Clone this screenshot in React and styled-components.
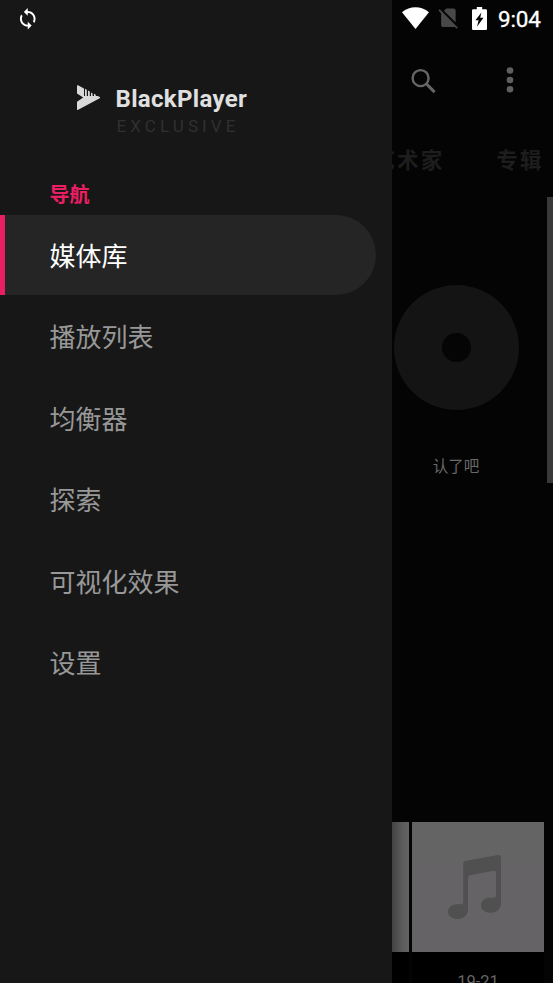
import React from "react";
import styled, { createGlobalStyle } from "styled-components";

const GlobalStyle = createGlobalStyle`
  * { box-sizing: border-box; }
  body { margin: 0; background: #040404; overflow: hidden; }
`;

const Screen = styled.div`
  display: grid;
  grid-template-columns: 392px 161px;
  width: 553px;
  height: 983px;
  overflow: hidden;
  background: #040404;
  font-family: Roboto, "Noto Sans CJK SC", sans-serif;
`;

const Drawer = styled.aside`
  display: flex;
  flex-direction: column;
  background: #171717;
`;

const DrawerStatus = styled.div`
  height: 38px;
  padding: 6.5px 0 0 15.7px;
  svg { display: block; }
`;

const Brand = styled.header`
  display: flex;
  height: 143px;
  padding: 47px 0 0 77px;
  gap: 14.5px;
  svg { flex: none; }
`;

const BrandText = styled.div`
  display: flex;
  flex-direction: column;
`;

const BrandName = styled.div`
  height: 29px;
  line-height: 28px;
  font-size: 24px;
  font-weight: 700;
  color: #e0e0e0;
  letter-spacing: 0.32px;
`;

const Edition = styled.div`
  padding-left: 1px;
  line-height: 24px;
  font-size: 17px;
  letter-spacing: 4.1px;
  color: #303030;
`;

const SectionTitle = styled.h2`
  margin: 0;
  height: 34px;
  padding-left: 49.5px;
  font-size: 20px;
  line-height: 29px;
  font-weight: 700;
  color: #e91e63;
`;

const Menu = styled.nav`
  display: flex;
  flex-direction: column;
  gap: 1.5px;
`;

const MenuItem = styled.a`
  display: flex;
  align-items: center;
  width: 376px;
  height: 80px;
  padding: 3px 0 0 ${(p) => (p.$active ? 44.4 : 49.4)}px;
  border-left: ${(p) => (p.$active ? "5px solid #e91e63" : "none")};
  border-radius: 0 40px 40px 0;
  background: ${(p) => (p.$active ? "#252525" : "transparent")};
  color: ${(p) => (p.$active ? "#fff" : "#989898")};
  font-size: 26px;
  line-height: 38px;
`;

const Library = styled.main`
  display: flex;
  flex-direction: column;
  min-width: 0;
  height: 983px;
  overflow: hidden;
`;

const StatusBar = styled.div`
  display: flex;
  flex: none;
  height: 38px;
  padding: 7px 0 0 10px;
  svg { flex: none; }
`;

const Clock = styled.span`
  margin-left: 11px;
  font-size: 22.5px;
  line-height: 25px;
  font-weight: 400;
  letter-spacing: -0.2px;
  color: #fff;
  -webkit-text-stroke: 0.3px #fff;
`;

const Toolbar = styled.div`
  display: flex;
  flex: none;
  justify-content: space-between;
  height: 84px;
  padding: 29px 38px 0 19px;
`;

const Tabs = styled.div`
  display: flex;
  flex: none;
  justify-content: space-between;
  height: 75px;
  padding: 23px 9.5px 0 0;
  margin-left: -18.5px;
  clip-path: inset(0 0 0 18.5px);
  font-size: 21.5px;
  line-height: 32px;
  font-weight: 700;
  letter-spacing: 2.1px;
  color: #1d1d1d;
  white-space: nowrap;
`;

const Feature = styled.section`
  display: flex;
  flex: none;
  justify-content: space-between;
  height: 625px;
`;

const Artist = styled.div`
  display: flex;
  flex-direction: column;
  align-items: center;
  width: 129px;
  padding-top: 87.5px;
`;

const Disc = styled.div`
  display: grid;
  place-items: center;
  width: 125px;
  height: 125px;
  border-radius: 50%;
  background: #141414;
  &::after {
    content: "";
    width: 29px;
    height: 29px;
    border-radius: 50%;
    background: #050505;
  }
`;

const ArtistName = styled.div`
  margin: 46.5px 1px 0 0;
  font-size: 15.5px;
  line-height: 23px;
  color: #696969;
`;

const Scrollbar = styled.div`
  width: 6px;
  height: 286px;
  background: #393939;
`;

const AlbumRow = styled.section`
  display: flex;
  flex: none;
  gap: 3px;
`;

const Album = styled.article`
  display: flex;
  flex-direction: column;
  width: ${(p) => p.$width}px;
  height: 161px;
  background: #000;
`;

const Cover = styled.div`
  height: 130px;
  background: ${(p) =>
    p.$shaded
      ? "linear-gradient(90deg, #434343, #5d5d5d 65%, #636363)"
      : "linear-gradient(#646464 0 31%, #656366 33%)"};
  svg { display: block; }
`;

const AlbumTitle = styled.div`
  padding-top: 20px;
  font-size: 16.5px;
  line-height: 19px;
  text-align: center;
  color: #656565;
`;

const SyncIcon = () => (
  <svg width="23.5" height="23.5" viewBox="0 0 24 24" fill="#fff">
    <path d="M12 4V1L8 5l4 4V6c3.31 0 6 2.69 6 6 0 1.01-.25 1.97-.7 2.8l1.46 1.46C19.54 15.03 20 13.57 20 12c0-4.42-3.58-8-8-8zm0 14c-3.31 0-6-2.69-6-6 0-1.01.25-1.97.7-2.8L5.24 7.74C4.46 8.97 4 10.43 4 12c0 4.42 3.58 8 8 8v3l4-4-4-4v3z" />
  </svg>
);

const Logo = () => (
  <svg width="24" height="26" viewBox="0 0 24 26" fill="#d9d9d9">
    <path d="M0 .8Q0-.1 1 .3L7 3.4V11H8V3.8L9.8 4.8V11H11V5.6L12.8 6.6V11H14V7.6L15.6 8.4V11H17V8.8L18.8 9.8V11H20.8L22.7 12Q23.6 12.6 22.7 13.2L1.2 24.8Q0 25.4 0 24.2V16.8L6.2 12.6L0 8.5Z" />
  </svg>
);

const WifiIcon = () => (
  <svg width="27" height="23" viewBox="0 0 27 23">
    <path fill="#fff" d="M0 5.2C7.8-1.4 19.2-1.4 27 5.2L13.5 22Z" />
  </svg>
);

const NoSimIcon = () => (
  <svg width="22" height="23" viewBox="2 1.7 21.2 22.1" fill="#484848">
    <path d="M18.99 5c0-1.1-.89-2-1.99-2h-7L7.66 5.34 19 16.68 18.99 5zM3.65 3.88L2.38 5.15 5 7.77V19c0 1.1.9 2 2 2h10.01c.35 0 .67-.1.96-.26l1.88 1.88 1.27-1.27L3.65 3.88z" />
  </svg>
);

const BatteryIcon = () => (
  <svg width="15" height="23" viewBox="0 0 15 23">
    <path fill="#fff" d="M4.8 0H10.2V2.3H13.8Q15 2.3 15 3.5V21.8Q15 23 13.8 23H1.2Q0 23 0 21.8V3.5Q0 2.3 1.2 2.3H4.8Z" />
    <path fill="#050505" d="M9.4 5.4L3.4 13.2H6.6L5 19.7L11.5 10.8H8.2Z" />
  </svg>
);

const Spacer = styled.span`
  flex: none;
  width: ${(p) => p.$w}px;
`;

const SearchIcon = () => (
  <svg width="26" height="28" viewBox="0 0 26 28" fill="none" stroke="#666">
    <circle cx="9.6" cy="11.1" r="8" strokeWidth="2.4" />
    <path d="M15.5 17L23.6 25.1" strokeWidth="3" />
  </svg>
);

const MoreIcon = () => (
  <svg width="10" height="28" viewBox="0 0 10 28" fill="#5f5f5f">
    <circle cx="5" cy="3.5" r="3.3" />
    <circle cx="5" cy="13" r="3.3" />
    <circle cx="5" cy="22.3" r="3.3" />
  </svg>
);

const NoteIcon = () => (
  <svg width="132" height="130" viewBox="0 0 132 130">
    <path
      fill="#505050"
      d="M51.3 42Q51.3 39.3 54 38.8L86 33Q89 32.6 89 35.5V81C89 87 84.5 90.8 79 90.8C73 90.8 69 87.7 69 83.5C69 79 73 75.8 78 75.8H81.5Q84 75.8 84 73.3V50.5Q84 48.3 81.7 48.7L58 53.3Q56 53.7 56 56V87.5C56 93 51.5 97 46 97C40 97 36 94 36 89.7C36 85.2 40 82.2 45 82.2H49Q51.3 82.2 51.3 80Z"
    />
  </svg>
);

const ITEMS = ["媒体库", "播放列表", "均衡器", "探索", "可视化效果", "设置"];

export default function App() {
  return (
    <>
      <GlobalStyle />
      <Screen lang="zh-CN">
        <Drawer>
          <DrawerStatus><SyncIcon /></DrawerStatus>
          <Brand>
            <Logo />
            <BrandText>
              <BrandName>BlackPlayer</BrandName>
              <Edition>EXCLUSIVE</Edition>
            </BrandText>
          </Brand>
          <SectionTitle>导航</SectionTitle>
          <Menu>
            {ITEMS.map((label, i) => (
              <MenuItem key={label} $active={i === 0}>{label}</MenuItem>
            ))}
          </Menu>
        </Drawer>
        <Library>
          <StatusBar>
            <WifiIcon />
            <Spacer $w={9} />
            <NoSimIcon />
            <Spacer $w={12} />
            <BatteryIcon />
            <Clock>9:04</Clock>
          </StatusBar>
          <Toolbar>
            <SearchIcon />
            <MoreIcon />
          </Toolbar>
          <Tabs>
            <span>艺术家</span>
            <span>专辑</span>
          </Tabs>
          <Feature>
            <Artist>
              <Disc />
              <ArtistName>认了吧</ArtistName>
            </Artist>
            <Scrollbar />
          </Feature>
          <AlbumRow>
            <Album $width={17}><Cover $shaded /></Album>
            <Album $width={132}>
              <Cover><NoteIcon /></Cover>
              <AlbumTitle>19-21</AlbumTitle>
            </Album>
          </AlbumRow>
        </Library>
      </Screen>
    </>
  );
}
